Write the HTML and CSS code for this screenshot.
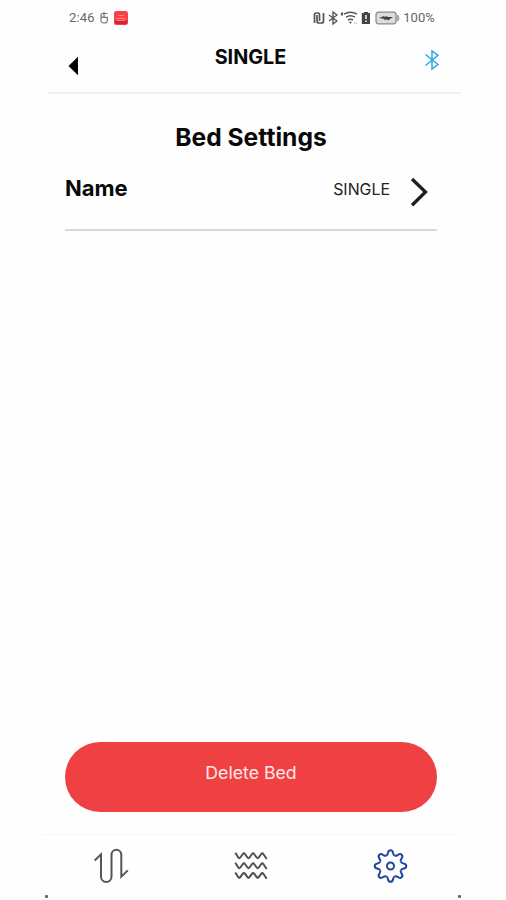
FILE: index.html
```html
<!DOCTYPE html>
<html lang="en">
<head>
<meta charset="utf-8">
<title>Bed Settings</title>
<link rel="stylesheet" href="styles.css">
</head>
<body>
<div class="screen">
  <div class="status">
    <span class="time">2:46</span>
    <svg class="s-mark" width="10" height="14" viewBox="0 0 10 14"><path d="M8.5 2.500H3.800Q2 2.500 2 4.400T3.800 6.300H8.500M2 8.500Q1.500 12 5 12T8.300 9V6.300H2V9M5 1v5" /></svg>
    <svg class="app" width="14" height="14" viewBox="0 0 14 14"><rect width="14" height="14" rx="2.5" fill="#fa3f49"/><path d="M1 9.500h12v2q0 1.500-1.500 1.500h-9Q1 13 1 11.500z" fill="#d9202c"/><path d="M2 7.500h10M4 4.500h6M3 9.500h8" stroke="#ff8085"/></svg>
    <div class="indicators">
      <svg width="12" height="14" viewBox="0 0 12 14"><path d="M1.500 12V4Q1.500 2 3.200 2H5Q6.500 2 6.500 4v6M4 4v6q0 2 2 2h2.500q2 0 2-2V2M4 5v4" stroke="#555" stroke-width="1.700" fill="none"/></svg>
      <svg width="10" height="14" viewBox="0 0 10 14"><path d="M1 4l8 6-4 3V1l4 3-8 6" stroke="#555" stroke-width="1.400" fill="none"/></svg>
      <svg width="17" height="14" viewBox="0 0 17 14"><path d="M3 3.200Q9.500-.5 16 3.200M5 6.200q4.500-2.800 9 0M7 9q2.500-1.600 5 0" stroke="#555" stroke-width="1.500" fill="none"/><path d="M8 10.700h3l-1.500 2.300zM0 1.500h2v3H0z" fill="#555"/><path d="M13 12h3" stroke="#bbb"/></svg>
      <svg width="10" height="14" viewBox="0 0 10 14"><path d="M3 1h4v1h2v11H.8V2H3z" fill="#444"/><path d="M5 4v4M5 9.500v1.600" stroke="#fff" stroke-width="1.400"/></svg>
      <svg class="battery" width="25" height="14" viewBox="0 0 25 14"><rect x="1" y="1.200" width="20" height="11.600" rx="2.500" fill="#ddd" stroke="#888" stroke-width="1.200"/><path d="M22 4q2 0 2 3t-2 3z" fill="#bbb" stroke="#888" stroke-width=".6"/><path d="M4 7l5-2 1 1 3-1.500L12 6h6l-5 3.500-1-1L9 9l.5-1z" fill="#444"/></svg>
      <span class="percent">100%</span>
    </div>
  </div>
  <header class="header">
    <svg class="back" width="12" height="20" viewBox="0 0 12 20"><path d="M.5 10L10 .8v18.400z" fill="#000"/></svg>
    <h1>SINGLE</h1>
    <svg class="bt" width="16" height="22" viewBox="0 0 16 22"><path d="M1.500 5.500L14 15.500 8 20V2l6 4.300L1.500 16.500" fill="none" stroke="#2da8e2" stroke-width="1.500"/></svg>
  </header>
  <main class="content">
    <h2>Bed Settings</h2>
    <div class="row">
      <span class="label">Name</span>
      <span class="value">SINGLE</span>
      <svg class="chevron" width="18" height="30" viewBox="0 0 18 30"><path d="M2 2L15.500 15 2 28.200" fill="none" stroke="#1e1e26" stroke-width="3.300"/></svg>
    </div>
    <button class="delete">Delete Bed</button>
  </main>
  <nav class="tabs">
    <svg width="36" height="36" viewBox="-.5 0 36 36"><path d="M1.200 12.500L7.500 6.300v22.200c0 7.300 10.500 7.300 10.500 0V7.200c0-7.200 9.800-7.200 9.800 0v21.500l6.500-6.300" fill="none" stroke="#555" stroke-width="2"/></svg>
    <svg width="36" height="36" viewBox="-.8 -.5 36 36"><g fill="none" stroke="#505050" stroke-width="2" stroke-linejoin="round"><path id="wave" d="M1.500 4.300L4.500 9q1 1.400 2 0l2.600-3.500q1-1.400 2 0l2.600 3.500q1 1.400 2 0l2.600-3.500q1-1.400 2 0l2.600 3.500q1 1.400 2 0l2.600-3.500q1-1.400 2 0l3.400 5"/><use href="#wave" y="10"/><use href="#wave" y="19.700"/></g></svg>
    <svg width="36" height="36" viewBox="-17.500 -18 36 36"><g fill="none" stroke="#21479b" stroke-width="2"><path id="tooth" d="M-4.300-10.350C-2.900-10.950-2.900-11.500-2.600-13C-2.300-15-1.500-15.800 0-15.800S2.300-15 2.600-13C2.900-11.500 2.900-10.950 4.300-10.350"/><use href="#tooth" transform="rotate(45)"/><use href="#tooth" transform="rotate(90)"/><use href="#tooth" transform="rotate(135)"/><use href="#tooth" transform="rotate(180)"/><use href="#tooth" transform="rotate(225)"/><use href="#tooth" transform="rotate(270)"/><use href="#tooth" transform="rotate(315)"/><circle r="3.500"/></g></svg>
  </nav>
  <div class="corners"><i></i><i></i></div>
</div>
</body>
</html>
```
FILE: styles.css
```css
* { box-sizing: border-box; }
body { margin: 0; background: #fefefe; font-family: Inter, "Liberation Sans", sans-serif; color: #090909; }
h1, h2 { margin: 0; }
svg { display: block; flex: none; }
.screen { width: 420px; height: 900px; margin-left: 41px; display: flex; flex-direction: column; }
.status { height: 36px; padding: 0 26px 0 28px; display: flex; align-items: center; font: 13px/16px Roboto, sans-serif; color: #666; }
.time { width: 30px; letter-spacing: .2px; }
.s-mark { fill: none; stroke: #777; stroke-width: 1.2; margin-right: 5px; }
.indicators { margin-left: auto; display: flex; align-items: center; gap: 3px; }
.battery { margin-left: 1px; }
.percent { letter-spacing: .1px; }
.header { height: 58px; margin-left: 7px; padding: 0 20px 0 20px; display: grid; grid-template-columns: 9px 1fr 17px; border-bottom: 2px solid #f0f0f0; }
.header h1 { font-size: 19.8px; line-height: 24px; margin-top: 9px; text-align: center; font-weight: 700; }
.back { margin-top: 20px; }
.bt { margin-top: 13px; }
.content { flex: 1; padding: 26px 24px 22px; display: flex; flex-direction: column; }
h2 { font-size: 24.6px; line-height: 35px; height: 34px; text-align: center; }
.row { height: 77px; border-bottom: 2px solid #d9d9d9; display: flex; align-items: flex-start; }
.label { font-size: 22px; line-height: 28px; font-weight: 700; margin-top: 20px; }
.value { font-size: 15.9px; line-height: 20px; margin: 26px 20px 0 auto; color: #222; }
.chevron { margin: 23px 9px 0 0; }
.delete { margin-top: auto; height: 70px; padding: 0 0 9px; border: 0; border-radius: 35px; background: #ef4143; color: #ffe7e7; font: 17.7px/22px Inter, sans-serif; }
.tabs { height: 60px; border-top: 1px solid #f7f7f7; display: grid; grid-template-columns: repeat(3, 1fr); justify-items: center; padding-top: 13px; }
.corners { height: 6px; padding: 1px 0 0 4px; display: flex; justify-content: space-between; }
.corners i { width: 3px; height: 3px; border-radius: 1px; background: #666; }
```
